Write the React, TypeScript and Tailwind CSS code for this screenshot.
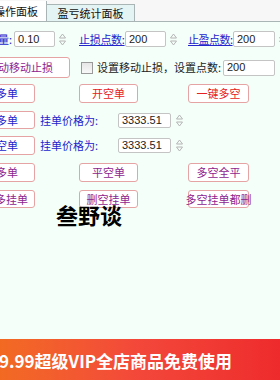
import React from 'react';

const cjk = { fontFamily: '"Noto Sans CJK SC", "Liberation Sans", sans-serif' };
const num = { fontFamily: '"Liberation Sans", "Noto Sans CJK SC", sans-serif' };

function Spinner() {
  return (
    <svg width="7" height="13" viewBox="0 0 7 13" className="shrink-0">
      <path d="M3.5 1 L6.5 5 L0.5 5 Z" fill="none" stroke="#b4b4b4" strokeWidth="1" />
      <path d="M3.5 12 L6.5 8 L0.5 8 Z" fill="none" stroke="#b4b4b4" strokeWidth="1" />
    </svg>
  );
}

function Field({ value, className }: { value: string; className: string }) {
  return (
    <div
      style={num}
      className={`shrink-0 flex items-center bg-white border border-[#c4c4c4] rounded-[2px] pl-[3px] text-[11px] text-[#222] ${className}`}
    >
      {value}
    </div>
  );
}

function Btn({ label, color, className }: { label: string; color: string; className: string }) {
  return (
    <div
      style={{ ...cjk, color }}
      className={`shrink-0 flex items-center justify-center whitespace-nowrap bg-white border border-[#e5a3a3] rounded-[3px] text-[11px] ${className}`}
    >
      {label}
    </div>
  );
}

export default function App() {
  const blue = '#2424cc';
  const red = '#e52121';
  const purple = '#8e248f';

  return (
    <div className="relative w-[280px] h-[380px] overflow-hidden bg-[#f5fffa] flex flex-col">
      {/* tabs */}
      <div className="h-[22px] shrink-0 flex items-end bg-[#f7f7f7] border-b border-[#a9b4b4]">
        <div
          style={cjk}
          className="h-[20px] w-[47px] shrink-0 bg-white border-r border-[#a9b4b4] flex items-center text-[11px] text-[#111] whitespace-nowrap"
        >
          <span className="-ml-[6px]">操作面板</span>
        </div>
        <div
          style={cjk}
          className="h-[17px] w-[88px] shrink-0 bg-[#e4f4f4] border-t border-r border-[#a9b4b4] flex items-center justify-center text-[11px] text-[#111]"
        >
          盈亏统计面板
        </div>
      </div>

      {/* row 1 */}
      <div className="mt-[9px] h-[16px] flex items-center text-[11px]" style={cjk}>
        <span className="shrink-0 -ml-[13px] w-[27px] whitespace-nowrap" style={{ color: blue }}>数量:</span>
        <Field value="0.10" className="w-[41px] h-[16px]" />
        <div className="ml-[4px]"><Spinner /></div>
        <span className="shrink-0 ml-[13px] w-[46px] whitespace-nowrap underline tracking-[-0.3px]" style={{ color: blue }}>止损点数:</span>
        <Field value="200" className="w-[41px] h-[16px]" />
        <div className="ml-[4px]"><Spinner /></div>
        <span className="shrink-0 ml-[11px] w-[45px] whitespace-nowrap underline tracking-[-0.5px]" style={{ color: blue }}>止盈点数:</span>
        <Field value="200" className="w-[42px] h-[16px]" />
        <div className="ml-[4px]"><Spinner /></div>
      </div>

      {/* row 2 */}
      <div className="mt-[10px] h-[21px] flex items-center text-[11px]" style={cjk}>
        <Btn label="启动移动止损" color={purple} className="-ml-[30px] w-[100px] h-[21px]" />
        <div className="shrink-0 ml-[11px] w-[12px] h-[12px] border border-[#9a9a9a] bg-gradient-to-b from-[#e6e6e6] to-[#f8f8f8]" />
        <span className="shrink-0 ml-[4px] w-[126px] whitespace-nowrap text-[#222]">设置移动止损，设置点数:</span>
        <Field value="200" className="w-[52px] h-[16px]" />
      </div>

      {/* row 3 */}
      <div className="mt-[6px] h-[19px] flex items-center">
        <Btn label="开多单" color={blue} className="-ml-[32px] w-[67px] h-[19px]" />
        <Btn label="开空单" color={red} className="ml-[44px] w-[59px] h-[19px]" />
        <Btn label="一键多空" color={red} className="ml-[50px] w-[61px] h-[19px]" />
      </div>

      {/* row 4 */}
      <div className="mt-[8px] h-[18px] flex items-center text-[11px]" style={cjk}>
        <Btn label="挂多单" color={blue} className="-ml-[32px] w-[67px] h-[18px]" />
        <span className="shrink-0 ml-[5px] w-[78px] whitespace-nowrap" style={{ color: blue }}>挂单价格为:</span>
        <Field value="3333.51" className="w-[53px] h-[15px]" />
        <div className="ml-[5px]"><Spinner /></div>
      </div>

      {/* row 5 */}
      <div className="mt-[7px] h-[19px] flex items-center text-[11px]" style={cjk}>
        <Btn label="挂空单" color={blue} className="-ml-[32px] w-[67px] h-[19px]" />
        <span className="shrink-0 ml-[5px] w-[78px] whitespace-nowrap" style={{ color: blue }}>挂单价格为:</span>
        <Field value="3333.51" className="w-[53px] h-[15px]" />
        <div className="ml-[5px]"><Spinner /></div>
      </div>

      {/* row 6 */}
      <div className="mt-[8px] h-[19px] flex items-center">
        <Btn label="平多单" color={purple} className="-ml-[32px] w-[67px] h-[19px]" />
        <Btn label="平空单" color={purple} className="ml-[44px] w-[59px] h-[19px]" />
        <Btn label="多空全平" color={purple} className="ml-[50px] w-[61px] h-[19px]" />
      </div>

      {/* row 7 */}
      <div className="mt-[8px] h-[18px] flex items-center">
        <Btn label="删多挂单" color={purple} className="-ml-[23px] w-[58px] h-[18px]" />
        <Btn label="删空挂单" color={purple} className="ml-[44px] w-[59px] h-[18px]" />
        <Btn label="多空挂单都删" color={purple} className="ml-[50px] w-[61px] h-[18px]" />
      </div>

      {/* watermark */}
      <div
        style={cjk}
        className="absolute left-[56px] top-[203px] text-[22px] font-bold text-black leading-none whitespace-nowrap"
      >
        叁野谈
      </div>

      {/* promo banner */}
      <div className="mt-auto h-[41px] shrink-0 bg-gradient-to-r from-[#f26a22] via-[#f3473a] to-[#ee2a2c] flex items-center">
        <span
          style={{ fontFamily: '"Noto Sans CJK SC", "Noto Sans", sans-serif' }}
          className="text-[17px] font-bold text-white whitespace-nowrap -ml-[1px] mt-[2px]"
        >
          9.99超级VIP全店商品免费使用
        </span>
      </div>
    </div>
  );
}
